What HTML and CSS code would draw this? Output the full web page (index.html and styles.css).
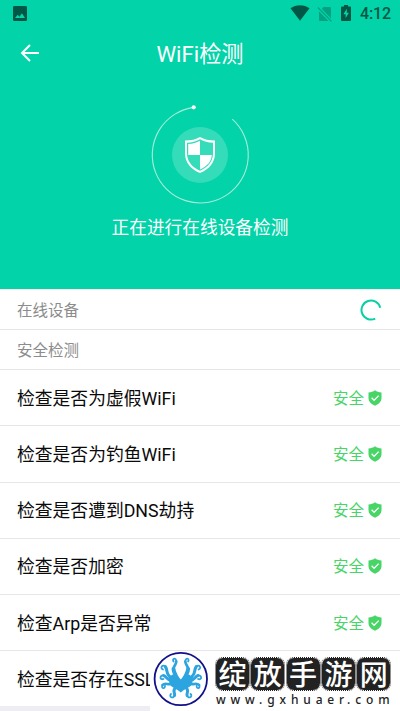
FILE: index.html
```html
<!DOCTYPE html>
<html lang="zh-CN">
<head>
<meta charset="utf-8">
<title>WiFi检测</title>
<link rel="stylesheet" href="styles.css">
</head>
<body>
<svg width="0" height="0" class="defs">
  <symbol id="safe" viewBox="0 0 14 16"><path d="M7 .3C5.300 1.700 3 2.300.5 2.400V8c0 3.500 2.500 6.200 6.500 7.700 4-1.500 6.500-4.200 6.500-7.700V2.400C11 2.300 8.700 1.700 7 .3z" fill="#48d567"/><path d="M3.600 7.800l2.500 2.500 4.600-4.700" fill="none" stroke="#fff" stroke-width="1.300"/></symbol>
</svg>
<div class="screen">
  <header class="hero">
    <div class="status">
      <svg class="pic" width="14" height="15" viewBox="0 0 14 15"><rect width="14" height="15" rx="1.300" fill="#005746"/><path d="M2 12l2.700-3.300 1.700 2L9 7.300l3 4.700z" fill="#02d3a8"/></svg>
      <svg class="wifi" width="20" height="16" viewBox="0 0 20 16"><path d="M.5 3.300C6 -.8 14 -.8 19.500 3.300L10 15.700z" fill="#005746"/></svg>
      <svg class="sim" width="16" height="16" viewBox="0 0 16 16"><path d="M6.500 1H13q1 0 1 1v10.500L4.800 2.700zM2 5.500L11.500 15H3q-1 0-1-1z" fill="#02a283"/><path d="M.8 1.500L14.500 15.300" stroke="#02a283" stroke-width="1.200"/></svg>
      <svg class="battery" width="10" height="16" viewBox="0 0 10 16"><path d="M3 0h4v1.500h2q1 0 1 1V15q0 1-1 1H1q-1 0-1-1V2.500q0-1 1-1h2z" fill="#005746"/><path d="M5.800 3.700L2.300 9.300h2.300v4L7.900 7.700H5.800z" fill="#02d3a8"/></svg>
      <span class="clock">4:12</span>
    </div>
    <div class="bar">
      <svg class="back" width="20" height="18" viewBox="0 0 20 18"><path d="M10 1L2 9l8 8M2 9h17" fill="none" stroke="#fff" stroke-width="2"/></svg>
      <h1>WiFi检测</h1>
    </div>
    <svg class="scan" width="100" height="100" viewBox="0 0 100 100">
      <path d="M82.300 14.200A48 48 0 1 1 43.700 2.400" fill="none" stroke="#a5eedd" stroke-width="1.100"/>
      <circle cx="43.700" cy="2.300" r="2.100" fill="#fff"/>
      <circle cx="50" cy="50" r="28" fill="#35dcb9"/>
      <path d="M50 32c-4 2.500-9 3.500-15 3.600V48c0 9.500 5.500 16 15 20 9.500-4 15-10.500 15-20V35.600C59 35.500 54 34.500 50 32z" fill="#fff"/>
      <path d="M50 34.300c-4 2.200-8 3.200-13 3.500V48c0 8.300 4.700 14 13 17.800 8.300-3.800 13-9.500 13-17.800V37.800c-5-.3-9-1.300-13-3.500z" fill="#35dcb9"/>
      <path d="M50 35.800c-3.600 1.900-7.200 3-11.800 3.300V50H50zM50 50v14.500C57.500 61 61.500 56.500 61.800 50z" fill="#fff"/>
    </svg>
    <p class="state">正在进行在线设备检测</p>
  </header>
  <main>
    <div class="section first"><span>在线设备</span>
      <svg class="spinner" width="22" height="22" viewBox="0 0 22 22"><path d="M20.200 8.700A9.500 9.500 0 1 0 15.200 19.600" fill="none" stroke="#08cfa6" stroke-width="2"/></svg>
    </div>
    <div class="section"><span>安全检测</span></div>
    <div class="row"><span>检查是否为虚假WiFi</span><em>安全<svg width="14" height="16"><use href="#safe"/></svg></em></div>
    <div class="row"><span>检查是否为钓鱼WiFi</span><em>安全<svg width="14" height="16"><use href="#safe"/></svg></em></div>
    <div class="row"><span>检查是否遭到DNS劫持</span><em>安全<svg width="14" height="16"><use href="#safe"/></svg></em></div>
    <div class="row"><span>检查是否加密</span><em>安全<svg width="14" height="16"><use href="#safe"/></svg></em></div>
    <div class="row"><span>检查Arp是否异常</span><em>安全<svg width="14" height="16"><use href="#safe"/></svg></em></div>
    <div class="row last"><span>检查是否存在SSL</span></div>
  </main>
  <div class="brand">
    <svg class="octopus" width="56" height="56" viewBox="0 0 56 56">
      <circle cx="27.800" cy="28" r="26.200" fill="#fff" stroke="#11118a" stroke-width="1.800"/>
      <path d="M27.800 28.500C30 25.500 33 23 36 23.500l4 3-1 7c-3 3.500-7 4-11.200 8-4.200-4-8.200-4.500-11.200-8l-1-7 4-3c3-.5 6 2 8.200 5z" fill="#2ca4df"/>
      <g fill="none" stroke="#2ca4df" stroke-linecap="round">
        <g id="arms">
          <path d="M20.500 10.500C18.500 7 23.500 6.500 23.300 10.500" stroke-width="1.800"/>
          <path d="M23.300 10.500C23 14 20.500 15 20.500 18" stroke-width="2.700"/>
          <path d="M20.500 18C20.500 21 22 23 24 27" stroke-width="4"/>
          <path d="M10 18.500C6.500 17 9.500 12.800 12.300 15.500" stroke-width="1.800"/>
          <path d="M12.300 15.500C15 19 12.500 24.500 19 27" stroke-width="3"/>
          <path d="M10.500 28C6.500 29.500 6.500 24 10.500 24.500" stroke-width="1.800"/>
          <path d="M10.500 24.500C13.500 25 14 29.500 19 30" stroke-width="2.800"/>
          <path d="M12 34.500C12.500 38.500 7.500 37.500 9.500 34" stroke-width="1.700"/>
          <path d="M9.500 34C12.500 31 15 34.500 19 32.500" stroke-width="2.600"/>
          <path d="M18 43C15.500 45.500 20 48.500 21.500 44.500" stroke-width="1.800"/>
          <path d="M21.500 44.500C22.500 41 18.500 40.500 23 36" stroke-width="3"/>
        </g>
        <use href="#arms" transform="translate(55.600 0) scale(-1 1)"/>
      </g>
    </svg>
    <div class="words">
      <div class="tiles"><b>绽</b><b>放</b><b>手</b><b>游</b><b>网</b></div>
      <div class="url">www.gxhuaer.com</div>
    </div>
  </div>
</div>
</body>
</html>
```
FILE: styles.css
```css
* { box-sizing: border-box; }
body { margin: 0; background: #fff; font-family: Roboto, "Noto Sans CJK SC", sans-serif; }
h1, p { margin: 0; font-weight: 400; }
svg { display: block; flex: none; }
.defs { position: absolute; }
.screen { position: relative; width: 400px; height: 711px; overflow: hidden; }
.hero { height: 289px; background: #02d3a8; color: #fff; display: flex; flex-direction: column; align-items: center; }
.status { width: 100%; height: 28px; padding: 5px 9px 0 13px; display: flex; align-items: flex-start; color: #005746; }
.pic { margin-top: 1px; }
.wifi { margin-left: auto; }
.sim { margin-left: 7px; margin-top: 1px; }
.battery { margin-left: 8px; }
.clock { margin-left: 9px; font-size: 16px; line-height: 18px; font-weight: 500; letter-spacing: -.1px; }
.bar { width: 100%; height: 50px; padding-bottom: 1px; display: grid; grid-template-columns: 60px 1fr 60px; align-items: center; }
.back { margin-left: 20px; }
h1 { padding-top: 3px; font-size: 22.200px; line-height: 30px; text-align: center; }
.scan { margin-top: 27px; }
.state { margin-top: 10px; font-size: 17.700px; line-height: 26px; }
.section { height: 40px; padding: 0 18px 2px 17px; border-bottom: 1px solid #e5e5ea; display: flex; align-items: center; justify-content: space-between; font-size: 15.500px; color: #8c8c8c; }
.first { height: 41px; border-top: 1px solid #fbecee; }
.spinner { margin-top: 2px; }
.row { height: 56.250px; padding: 0 18px 2px 17px; border-bottom: 1px solid #e5e5ea; display: flex; align-items: center; justify-content: space-between; font-size: 17.800px; color: #0a0a0a; }
.row em { display: flex; align-items: center; gap: 4px; font-style: normal; font-size: 15.500px; color: #48d567; }
.row em svg { margin-top: 2px; }
.last { border-bottom: 0; }
main { height: 422px; background: linear-gradient(#fff 417px, #ededf3 417px); }
.brand { position: absolute; left: 150px; top: 650px; width: 250px; height: 61px; background: #fff; display: flex; padding-left: 3px; }
.brand { clip-path: inset(1px 0 0 0); }
.octopus { margin-top: 1px; }
.words { margin-left: 7px; padding-top: 8px; }
.tiles { display: flex; gap: 2.300px; }
.tiles b { width: 33px; height: 32px; border-radius: 7px; background: #222; color: #fff; font-family: "Noto Sans CJK SC", sans-serif; font-size: 28px; line-height: 31px; font-weight: 500; text-align: center; outline: 1px dotted #222; outline-offset: 0; }
.url { margin-top: 2px; font: 500 12px/15px "Noto Sans", sans-serif; letter-spacing: 4.850px; color: #222; white-space: nowrap; }
```
